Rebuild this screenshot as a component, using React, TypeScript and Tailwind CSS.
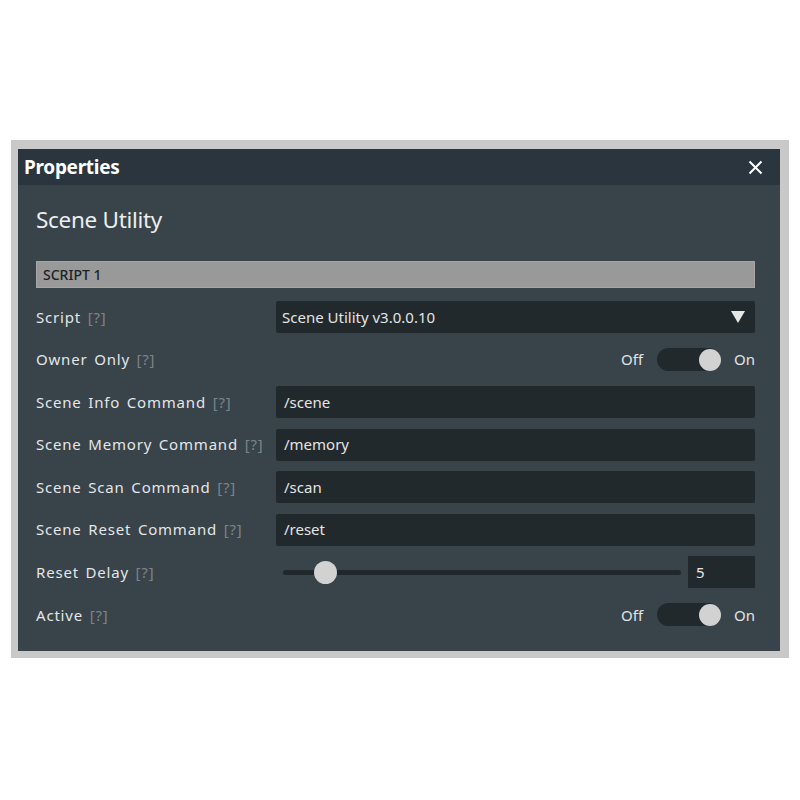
const FONT = "font-['Noto_Sans','DejaVu_Sans',sans-serif]";

function Label({ text }: { text: string }) {
    return (
        <div className="w-[240px] shrink-0 text-[15px] text-[#e4e6e7] tracking-[0.8px] [word-spacing:2px]">
            {text} <span className="text-[#7d8489]">[?]</span>
        </div>
    );
}

function TextField({ value }: { value: string }) {
    return (
        <div className="flex h-8 flex-1 items-center rounded-[2px] bg-[#22292c] px-2 text-[15px] text-[#e2e4e5]">
            {value}
        </div>
    );
}

function Toggle() {
    return (
        <div className="flex flex-1 items-center justify-end gap-[14px] text-[15px] text-[#e2e4e5]">
            <span>Off</span>
            <div className="relative h-[23px] w-[63px] rounded-full bg-[#22292c]">
                <div className="absolute right-[-1px] top-[1px] h-[22px] w-[22px] rounded-full bg-[#d2d2d2]" />
            </div>
            <span>On</span>
        </div>
    );
}

export default function App() {
    return (
        <div className={`min-h-[800px] bg-white pt-[140px] ${FONT}`}>
            <div className="mx-[11px] w-[778px] border-l-[7px] border-r-[9px] border-t-[9px] border-b-[7px] border-[#c9c9c9]">
                <div className="flex h-9 items-center justify-between bg-[#2a353d] pl-[6px] pr-[17px]">
                    <span className="text-[19px] font-bold text-white tracking-[-0.3px]">Properties</span>
                    <svg width="15" height="15" viewBox="0 0 15 15" className="text-white">
                        <path d="M1.5 1.5 L13.5 13.5 M13.5 1.5 L1.5 13.5" stroke="currentColor" strokeWidth="2" />
                    </svg>
                </div>
                <div className="bg-[#38434a] pb-[20px] pl-[18px] pr-[25px] pt-[18px]">
                    <div className="text-[22.5px] text-[#eceeef] tracking-[-0.3px]">Scene Utility</div>
                    <div className="mt-[24px] flex h-[27px] items-center border border-[#a6a6a6] bg-[#999999] px-[6px] text-[14px] font-medium text-[#1c2226]">
                        SCRIPT 1
                    </div>
                    <div className="mt-[13px] flex flex-col gap-[10.6px]">
                        <div className="flex h-8 items-center">
                            <Label text="Script" />
                            <div className="flex h-8 flex-1 items-center justify-between rounded-[2px] bg-[#22292c] pl-[6px] pr-[10px] text-[15px] text-[#e2e4e5]">
                                <span>Scene Utility v3.0.0.10</span>
                                <svg width="14" height="12" viewBox="0 0 14 12">
                                    <path d="M0 0 H14 L7 12 Z" fill="#e6e6e6" />
                                </svg>
                            </div>
                        </div>
                        <div className="flex h-8 items-center">
                            <Label text="Owner Only" />
                            <Toggle />
                        </div>
                        <div className="flex h-8 items-center">
                            <Label text="Scene Info Command" />
                            <TextField value="/scene" />
                        </div>
                        <div className="flex h-8 items-center">
                            <Label text="Scene Memory Command" />
                            <TextField value="/memory" />
                        </div>
                        <div className="flex h-8 items-center">
                            <Label text="Scene Scan Command" />
                            <TextField value="/scan" />
                        </div>
                        <div className="flex h-8 items-center">
                            <Label text="Scene Reset Command" />
                            <TextField value="/reset" />
                        </div>
                        <div className="flex h-8 items-center">
                            <Label text="Reset Delay" />
                            <div className="relative ml-[7px] mr-[7px] h-[5px] flex-1 rounded-full bg-[#22292c]">
                                <div className="absolute left-[31px] top-[-9px] h-[23px] w-[23px] rounded-full bg-[#d2d2d2]" />
                            </div>
                            <div className="flex h-8 w-[67px] items-center bg-[#22292c] px-2 text-[15px] text-[#e2e4e5]">5</div>
                        </div>
                        <div className="flex h-8 items-center">
                            <Label text="Active" />
                            <Toggle />
                        </div>
                    </div>
                </div>
            </div>
        </div>
    );
}
